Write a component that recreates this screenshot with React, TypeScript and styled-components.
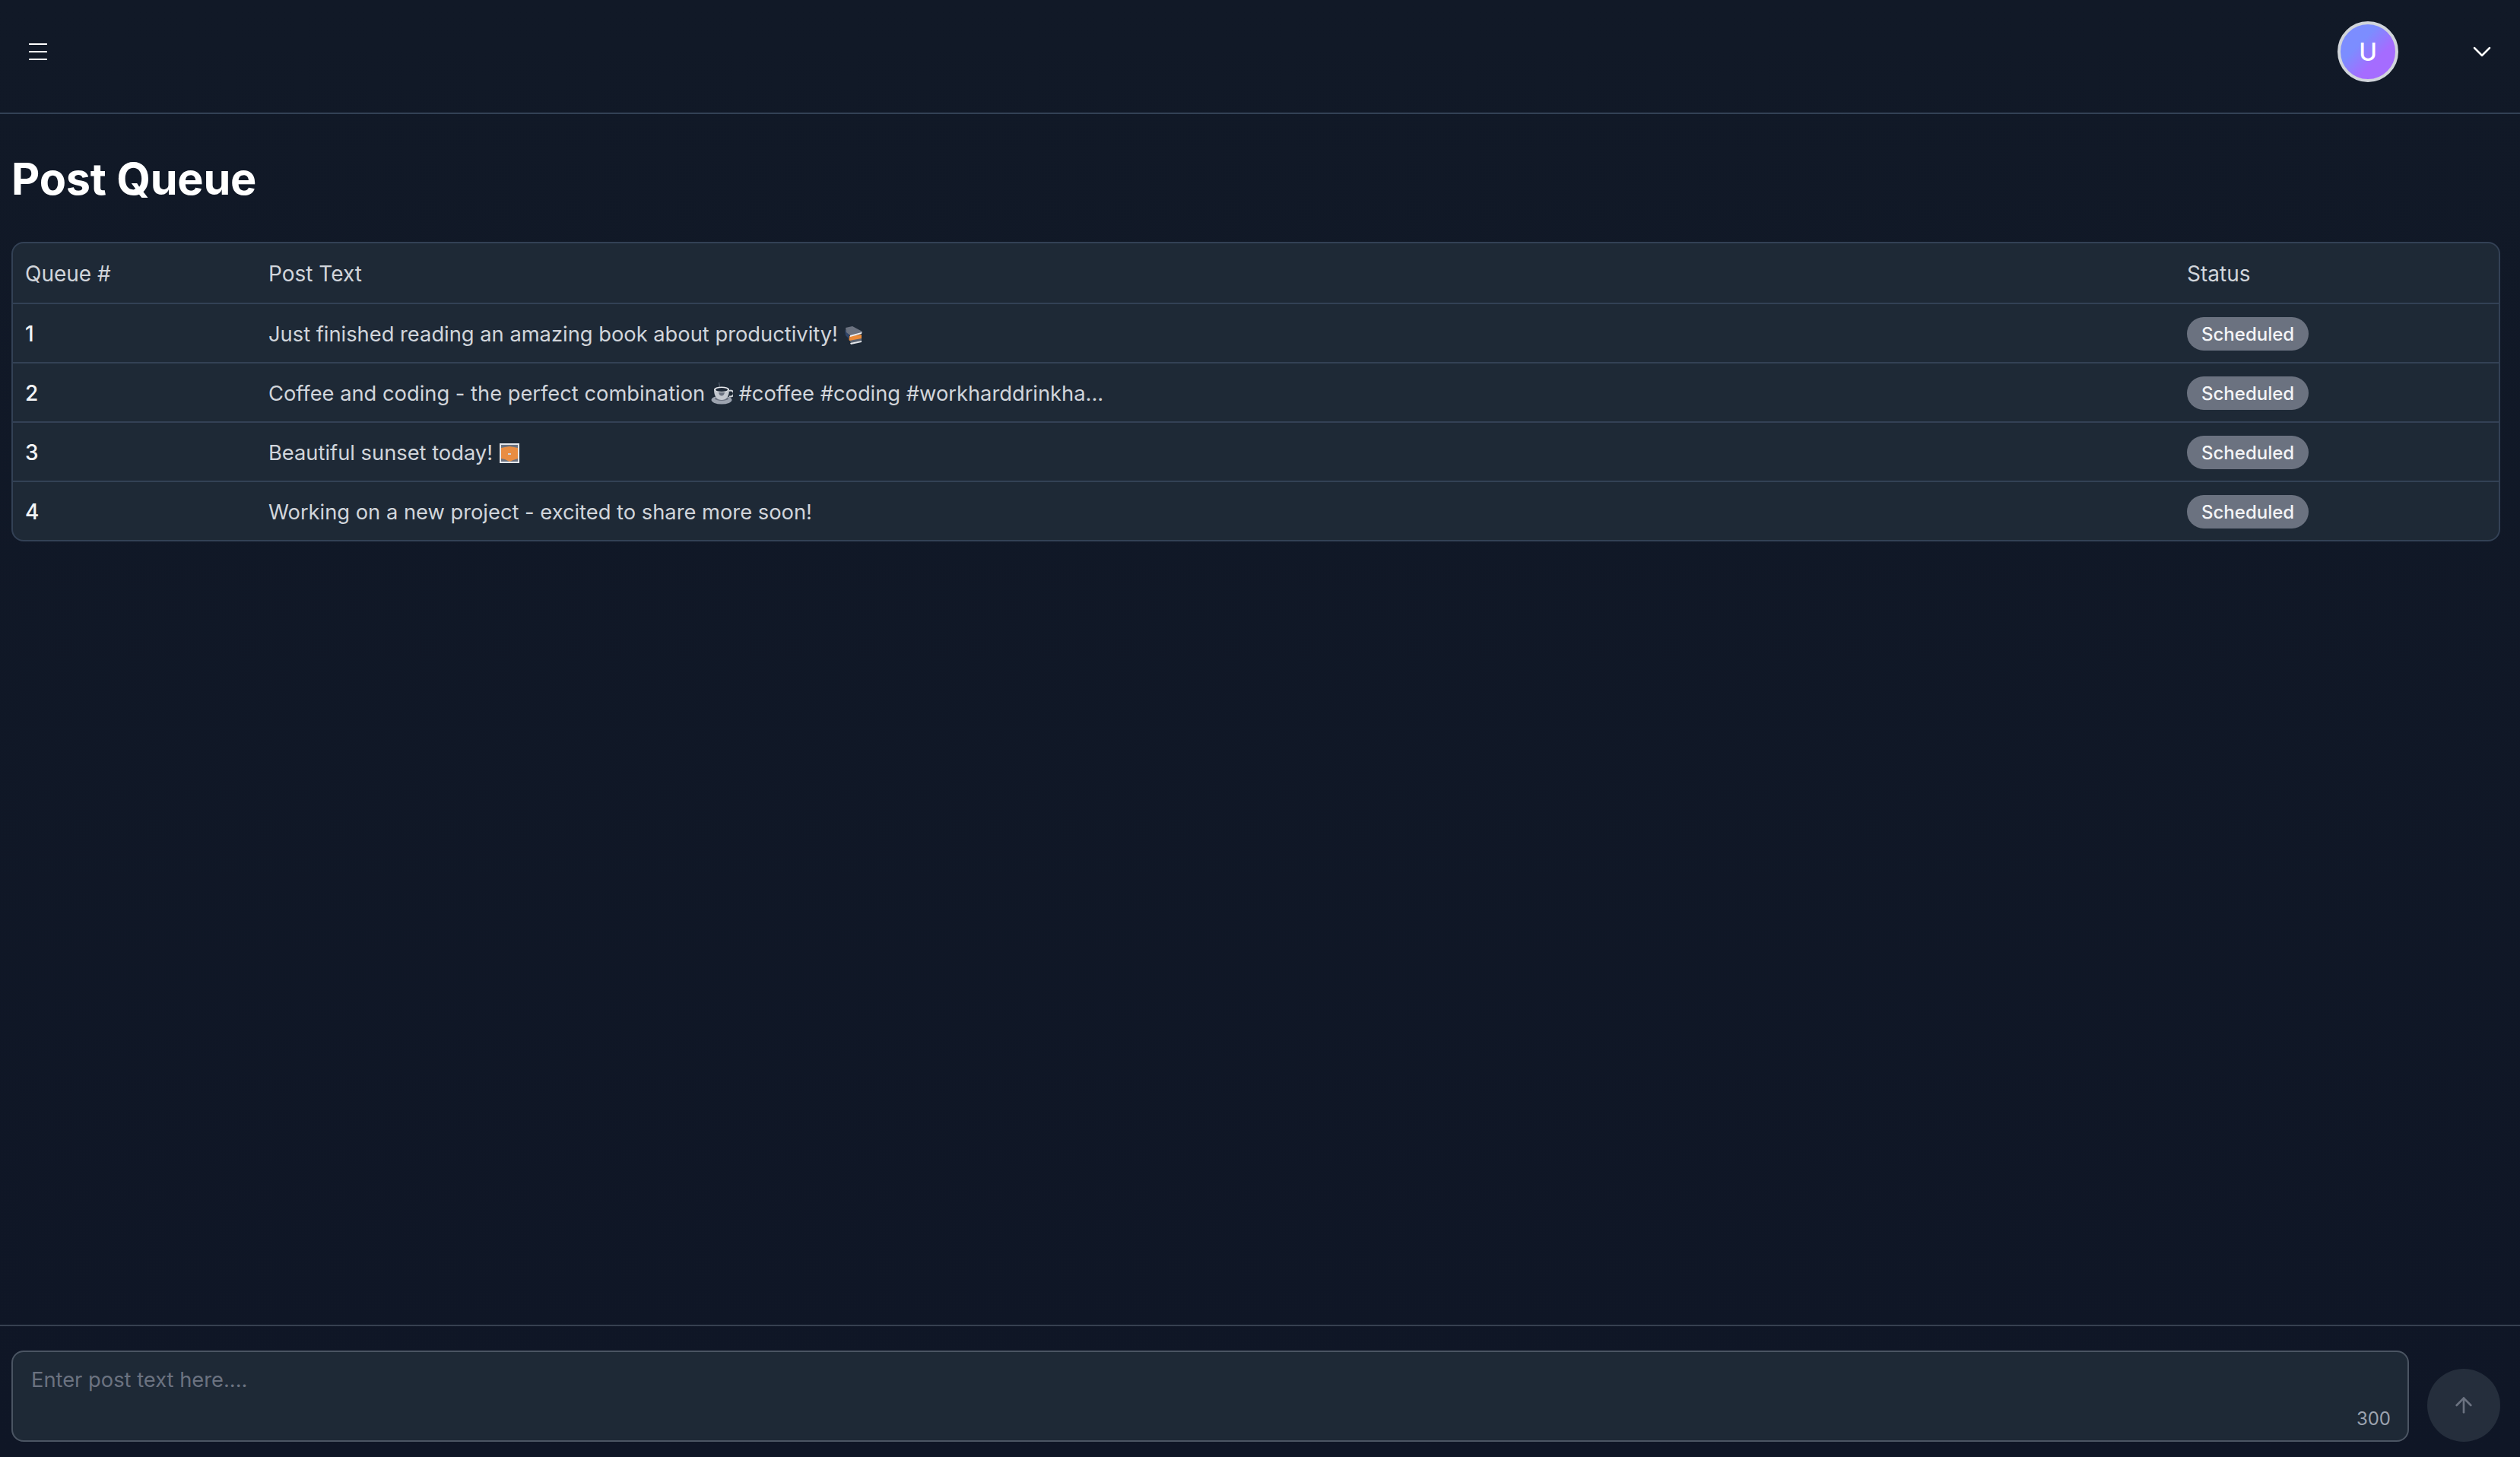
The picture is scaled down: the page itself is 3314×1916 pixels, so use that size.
import React, { FunctionComponent, ReactNode } from 'react';
import styled, { createGlobalStyle } from 'styled-components';
import { ArrowUp } from 'lucide-react';

const GlobalStyle = createGlobalStyle`
  * {
    box-sizing: border-box;
  }
  html,
  body {
    margin: 0;
    padding: 0;
    height: 100%;
    background: #111827;
  }
  body {
    font-family: Inter, 'Liberation Sans', sans-serif;
  }
`;

const Page = styled.div`
  display: flex;
  flex-direction: column;
  height: 100vh;
  overflow: hidden;
  background: linear-gradient(180deg, #111927 0%, #0f1626 100%);
  color: #f9fafb;
`;

const TopBar = styled.header`
  display: flex;
  align-items: center;
  justify-content: space-between;
  flex: none;
  height: 150px;
  padding: 0 38px 12px 38px;
  border-bottom: 2px solid #334155;
`;

const IconButton = styled.button`
  display: flex;
  padding: 0;
  border: 0;
  background: none;
  color: #fff;
`;

const UserArea = styled.div`
  display: flex;
  align-items: center;
  gap: 98px;
`;

const Avatar = styled.div`
  display: flex;
  align-items: center;
  justify-content: center;
  width: 80px;
  height: 80px;
  border: 4px solid #d1d5db;
  border-radius: 50%;
  background: linear-gradient(135deg, #7c8dff 35%, #a56cff 65%);
  color: #fff;
  font-size: 32px;
  font-weight: 500;
`;

const Main = styled.main`
  flex: 1;
  min-height: 0;
  padding: 0 26px 0 15px;
`;

const Title = styled.h1`
  margin: 0;
  padding: 49px 0 47px 0;
  color: #fff;
  font-size: 57.6px;
  line-height: 72px;
  font-weight: 700;
  letter-spacing: -0.2px;
`;

const TableWrap = styled.div`
  overflow: hidden;
  border: 2px solid #334155;
  border-radius: 16px;
  background: #1e2936;
`;

const QueueTable = styled.table`
  width: 100%;
  border-collapse: separate;
  border-spacing: 0;
  table-layout: fixed;
`;

const HeadCell = styled.th<{ $width?: number }>`
  width: ${(p) => (p.$width ? `${p.$width}px` : 'auto')};
  height: 78px;
  padding: 2px 16px 0;
  color: #d1d5db;
  font-size: 28px;
  font-weight: 400;
  text-align: left;
`;

const Cell = styled.td<{ $strong?: boolean }>`
  height: 78px;
  padding: 2px 16px 0;
  border-top: 2px solid #334155;
  color: ${(p) => (p.$strong ? '#f3f4f6' : '#d1d5db')};
  font-size: ${(p) => (p.$strong ? '28px' : '27.3px')};
  font-weight: ${(p) => (p.$strong ? 500 : 400)};
  white-space: nowrap;
`;

const Badge = styled.span`
  display: inline-flex;
  align-items: center;
  height: 44px;
  padding: 0 19px;
  border-radius: 22px;
  background: #6b7280;
  color: #f3f4f6;
  font-size: 24px;
  font-weight: 500;
  vertical-align: middle;
`;

const EmojiSvg = styled.svg`
  display: inline-block;
  vertical-align: -5px;
`;

const Composer = styled.footer`
  display: flex;
  align-items: flex-end;
  gap: 24px;
  flex: none;
  height: 174px;
  padding: 32px 26px 20px 15px;
  border-top: 2px solid #374151;
`;

const InputWrap = styled.div`
  position: relative;
  flex: 1;
  height: 120px;
`;

const PostInput = styled.textarea`
  display: block;
  width: 100%;
  height: 100%;
  padding: 18px 24px;
  border: 2px solid #4b5563;
  border-radius: 16px;
  outline: none;
  resize: none;
  background: #1e2936;
  color: #f9fafb;
  font-family: inherit;
  font-size: 27.3px;
  line-height: 37px;

  &::placeholder {
    color: #6b7280;
    opacity: 1;
  }
`;

const Counter = styled.span`
  position: absolute;
  right: 24px;
  bottom: 15px;
  color: #9ca3af;
  font-size: 24px;
  line-height: 30px;
`;

const SendButton = styled.button`
  display: flex;
  align-items: center;
  justify-content: center;
  flex: none;
  width: 96px;
  height: 96px;
  padding: 0;
  border: 0;
  border-radius: 50%;
  background: #252e3c;
  color: #6b7280;
`;

const BooksEmoji = () => (
  <EmojiSvg width="26" height="26" viewBox="0 0 26 26" aria-hidden="true">
    <path d="M7 19 L23 16 L23 20 L9 23 Z" fill="#5b6472" />
    <path d="M8 23 L23 20 L23 22 L9 25 Z" fill="#e5e7eb" />
    <path d="M5 14 L23 12 L23 17 L7 20 Z" fill="#e98a3a" />
    <path d="M1 5 L7 13 L7 18 L2 13 Z" fill="#2f4468" />
    <path d="M2 3 L11 1 L24 8 L24 10 L9 14 L3 9 Z" fill="#6b7280" />
    <path d="M8 13 L23 9 L23 11 L8 15 Z" fill="#eef0f3" />
  </EmojiSvg>
);

const CoffeeEmoji = () => (
  <EmojiSvg width="29" height="30" viewBox="0 0 29 30" aria-hidden="true">
    <path d="M11 1 C9 3 13 4 11 7" fill="none" stroke="#4b5563" strokeWidth="1.5" />
    <ellipse cx="14" cy="24" rx="13.5" ry="5.5" fill="#9ca3af" />
    <ellipse cx="14" cy="22" rx="9" ry="3" fill="#6b7280" />
    <path d="M24 12 a4 4 0 1 1 0 7" fill="none" stroke="#d1d5db" strokeWidth="2" />
    <path d="M4 10 C4 20 8 24 14 24 C20 24 24 20 24 10 Z" fill="#c4c8cf" />
    <path d="M10 14 C11 20 17 20 18 14 Z" fill="#6b7280" />
    <ellipse cx="14" cy="10" rx="10" ry="3.6" fill="#e5e7eb" />
    <ellipse cx="14" cy="10.5" rx="8" ry="2.5" fill="#1f2937" />
  </EmojiSvg>
);

const SunsetEmoji = () => (
  <EmojiSvg width="28" height="27" viewBox="0 0 28 27" aria-hidden="true">
    <rect x="1" y="0" width="26" height="26" fill="#e5e7eb" />
    <rect x="3" y="2" width="22" height="22" fill="#6b7280" />
    <path d="M3 6 L8 5 L14 4 L20 5 L25 6 L25 20 L19 22 L14 24 L8 21 L3 20 Z" fill="#e98d42" />
    <rect x="12" y="13" width="4" height="2" fill="#d1d5db" />
  </EmojiSvg>
);

type Post = {
  id: number;
  content: ReactNode;
};

const posts: Post[] = [
  {
    id: 1,
    content: (
      <>
        Just finished reading an amazing book about productivity! <BooksEmoji />
      </>
    ),
  },
  {
    id: 2,
    content: (
      <>
        Coffee and coding - the perfect combination <CoffeeEmoji /> #coffee #coding #workharddrinkha...
      </>
    ),
  },
  {
    id: 3,
    content: (
      <>
        Beautiful sunset today! <SunsetEmoji />
      </>
    ),
  },
  { id: 4, content: 'Working on a new project - excited to share more soon!' },
];

const App: FunctionComponent = function () {
  return (
    <Page>
      <GlobalStyle />
      <TopBar>
        <IconButton aria-label="Menu">
          <svg width="24" height="22" viewBox="0 0 24 22" fill="none" stroke="currentColor" strokeWidth="2.2" strokeLinecap="round">
            <path d="M1 1h22M1 11h22M1 21h22" />
          </svg>
        </IconButton>
        <UserArea>
          <Avatar>U</Avatar>
          <IconButton aria-label="Account menu">
            <svg width="24" height="14" viewBox="0 0 24 14" fill="none" stroke="currentColor" strokeWidth="2.5" strokeLinecap="round" strokeLinejoin="round">
              <path d="M2 2l10 10 10-10" />
            </svg>
          </IconButton>
        </UserArea>
      </TopBar>

      <Main>
        <Title>Post Queue</Title>
        <TableWrap>
          <QueueTable>
            <thead>
              <tr>
                <HeadCell $width={320}>Queue #</HeadCell>
                <HeadCell>Post Text</HeadCell>
                <HeadCell $width={426}>Status</HeadCell>
              </tr>
            </thead>
            <tbody>
              {posts.map((post) => (
                <tr key={post.id}>
                  <Cell $strong>{post.id}</Cell>
                  <Cell>{post.content}</Cell>
                  <Cell>
                    <Badge>Scheduled</Badge>
                  </Cell>
                </tr>
              ))}
            </tbody>
          </QueueTable>
        </TableWrap>
      </Main>

      <Composer>
        <InputWrap>
          <PostInput placeholder="Enter post text here...." />
          <Counter>300</Counter>
        </InputWrap>
        <SendButton aria-label="Send">
          <ArrowUp size={32} />
        </SendButton>
      </Composer>
    </Page>
  );
};

export default App;
